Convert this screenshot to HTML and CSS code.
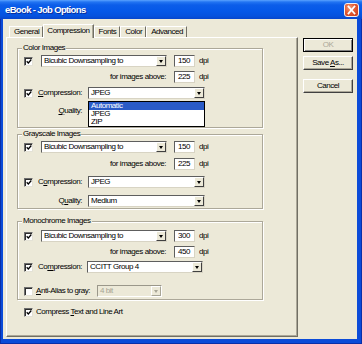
FILE: index.html
```html
<!DOCTYPE html>
<html>
<head>
<meta charset="utf-8">
<title>eBook - Job Options</title>
<link rel="stylesheet" href="styles.css">
</head>
<body>
<div class="window">
  <div class="titlebar">
    <span class="title">eBook - Job Options</span>
    <span class="close"><svg width="15" height="14" viewBox="0 0 15 14"><path d="M4.5 3.5 L10.5 10.5 M10.5 3.5 L4.5 10.5" stroke="#fff" stroke-width="1.8" stroke-linecap="square"/></svg></span>
  </div>
  <div class="frame">
    <div class="client">
      <div class="main">
        <div class="tabs">
          <span class="tab">General</span>
          <span class="tab active">Compression</span>
          <span class="tab">Fonts</span>
          <span class="tab">Color</span>
          <span class="tab">Advanced</span>
        </div>
        <div class="panel">
          <div class="group g-color">
            <span class="legend">Color Images</span>
            <div class="row first">
              <span class="check"><svg viewBox="0 0 7 7"><path d="M0.8 3.3 L2.7 5.2 L6.2 1.2"/></svg></span>
              <span class="select w-sample"><span class="val">Bicubic Downsampling to</span><span class="arrow"></span></span>
              <span class="input">150</span><span class="unit">dpi</span>
            </div>
            <div class="row gap4">
              <span class="above">for images above:</span>
              <span class="input">225</span><span class="unit">dpi</span>
            </div>
            <div class="row gap4">
              <span class="check"><svg viewBox="0 0 7 7"><path d="M0.8 3.3 L2.7 5.2 L6.2 1.2"/></svg></span>
              <span class="lbl w-comp"><u>C</u>ompression:</span>
              <span class="select w-type has-list"><span class="val">JPEG</span><span class="arrow"></span>
                <span class="listbox">
                  <span class="item sel">Automatic</span>
                  <span class="item">JPEG</span>
                  <span class="item">ZIP</span>
                </span>
              </span>
            </div>
            <div class="row gap6">
              <span class="lbl w-qual"><u>Q</u>uality:</span>
              <span class="select w-type"><span class="val"></span><span class="arrow"></span></span>
            </div>
          </div>

          <div class="group g-gray">
            <span class="legend">Grayscale Images</span>
            <div class="row first">
              <span class="check"><svg viewBox="0 0 7 7"><path d="M0.8 3.3 L2.7 5.2 L6.2 1.2"/></svg></span>
              <span class="select w-sample"><span class="val">Bicubic Downsampling to</span><span class="arrow"></span></span>
              <span class="input">150</span><span class="unit">dpi</span>
            </div>
            <div class="row gap5">
              <span class="above">for images above:</span>
              <span class="input">225</span><span class="unit">dpi</span>
            </div>
            <div class="row gap6">
              <span class="check"><svg viewBox="0 0 7 7"><path d="M0.8 3.3 L2.7 5.2 L6.2 1.2"/></svg></span>
              <span class="lbl w-comp">C<u>o</u>mpression:</span>
              <span class="select w-type"><span class="val">JPEG</span><span class="arrow"></span></span>
            </div>
            <div class="row gap7">
              <span class="lbl w-qual">Q<u>u</u>ality:</span>
              <span class="select w-type"><span class="val">Medium</span><span class="arrow"></span></span>
            </div>
          </div>

          <div class="group g-mono">
            <span class="legend">Monochrome Images</span>
            <div class="row first">
              <span class="check"><svg viewBox="0 0 7 7"><path d="M0.8 3.3 L2.7 5.2 L6.2 1.2"/></svg></span>
              <span class="select w-sample"><span class="val">Bicubic Downsampling to</span><span class="arrow"></span></span>
              <span class="input">300</span><span class="unit">dpi</span>
            </div>
            <div class="row gap4">
              <span class="above">for images above:</span>
              <span class="input">450</span><span class="unit">dpi</span>
            </div>
            <div class="row gap3">
              <span class="check"><svg viewBox="0 0 7 7"><path d="M0.8 3.3 L2.7 5.2 L6.2 1.2"/></svg></span>
              <span class="lbl w-comp-m">Co<u>m</u>pression:</span>
              <span class="select w-type-m"><span class="val">CCITT Group 4</span><span class="arrow"></span></span>
            </div>
            <div class="row gap12">
              <span class="check off"></span>
              <span class="lbl w-anti"><u>A</u>nti-Alias to gray:</span>
              <span class="select w-bit disabled"><span class="val">4 bit</span><span class="arrow"></span></span>
            </div>
          </div>

          <div class="row compress">
            <span class="check"><svg viewBox="0 0 7 7"><path d="M0.8 3.3 L2.7 5.2 L6.2 1.2"/></svg></span>
            <span class="lbl">Compress <u>T</u>ext and Line Art</span>
          </div>
        </div>
      </div>
      <div class="buttons">
        <span class="btn default disabled">OK</span>
        <span class="btn b-save">Save <u>A</u>s...</span>
        <span class="btn b-cancel">Cancel</span>
      </div>
    </div>
  </div>
</div>
</body>
</html>
```

FILE: styles.css
```css
* { box-sizing: border-box; }
html, body { margin: 0; padding: 0; }
body {
  width: 362px;
  height: 344px;
  overflow: hidden;
  font-family: "Liberation Sans", Arial, sans-serif;
  font-size: 8px;
  letter-spacing: -0.45px;
  color: #000;
  background: #0B4BD8;
}
u { text-decoration: underline; text-underline-offset: 1px; }

.window {
  width: 362px;
  height: 344px;
  display: flex;
  flex-direction: column;
  background: #0B4BD8;
}
.titlebar {
  height: 19px;
  flex: none;
  display: flex;
  align-items: center;
  padding: 0 3px 0 5px;
  background: linear-gradient(to bottom, #5AA2FF 0px, #2274F2 2px, #0C5DE9 5px, #0558E8 11px, #0552DE 16px, #0746CC 19px);
}
.title {
  flex: 1;
  color: #fff;
  font-weight: bold;
  font-size: 9.5px;
  letter-spacing: -0.65px;
  text-shadow: 1px 1px 0 #0A2F9C;
}
.close {
  width: 15px;
  height: 14px;
  margin-top: 1px;
  border-radius: 3px;
  border: 1px solid #F4F0F0;
  background: radial-gradient(circle at 35% 30%, #F29A78 0%, #E25A32 45%, #C8371A 100%);
  display: flex;
  align-items: center;
  justify-content: center;
}
.close svg { display: block; margin: -1px; }

.frame {
  flex: 1;
  display: flex;
  padding: 0 5px 5px 3px;
  box-shadow: inset 1px 0 0 #0A2FA8, inset -1px 0 0 #0A2FA8, inset 0 -1px 0 #0A2FA8;
}
.client {
  flex: 1;
  display: flex;
  background: #ECE9D8;
  padding: 5px 4px 2px 3px;
}
.main {
  width: 292px;
  display: flex;
  flex-direction: column;
}

/* tabs */
.tabs {
  display: flex;
  align-items: flex-start;
  height: 14px;
  margin-bottom: -1px;
  padding-left: 3px;
  position: relative;
  z-index: 1;
}
.tab {
  height: 11px;
  margin-top: 2px;
  padding: 0 3px 0 4px;
  line-height: 10px;
  background: #ECE9D8;
  border-top: 1px solid #fff;
  border-left: 1px solid #fff;
  border-right: 1px solid #716F64;
  white-space: nowrap;
}
.tab.active {
  height: 14px;
  margin-top: 0;
  line-height: 12px;
  padding: 0 3px;
  box-shadow: inset -1px 0 0 #ACA899;
}

.panel {
  flex: 1;
  display: flex;
  flex-direction: column;
  align-items: flex-start;
  border: 1px solid;
  border-color: #fff #716F64 #716F64 #fff;
  box-shadow: inset -1px -1px 0 #ACA899;
  padding: 10px 0 0 10px;
}

/* group boxes */
.group {
  width: 246px;
  border: 1px solid #ACA899;
  box-shadow: inset 1px 1px 0 #fff, 1px 1px 0 #fff;
  padding: 0 0 0 6px;
  position: relative;
}
.legend {
  display: block;
  width: fit-content;
  margin: -6px 0 0 -2px;
  padding: 0 1px;
  height: 10px;
  line-height: 10px;
  background: #ECE9D8;
  white-space: nowrap;
}
.g-color { padding-bottom: 10px; }
.g-gray { margin-top: 6px; padding-bottom: 1px; }
.g-mono { margin-top: 12px; padding-bottom: 2px; }

.row {
  display: flex;
  align-items: center;
  height: 12px;
  white-space: nowrap;
}
.row.first { margin-top: 2px; }
.g-mono .row.first { margin-top: 4px; }
.gap3 { margin-top: 3px; }
.gap4 { margin-top: 4px; }
.gap5 { margin-top: 5px; }
.gap6 { margin-top: 6px; }
.gap7 { margin-top: 7px; }
.gap12 { margin-top: 12px; }
.compress { margin: 6px 0 0 7px; }

/* checkbox */
.check {
  flex: none;
  width: 9px;
  height: 9px;
  background: #fff;
  border: 1px solid;
  border-color: #6E6E6E #E4E2D6 #E4E2D6 #6E6E6E;
  box-shadow: inset 1px 1px 0 #2E2E2E;
  display: flex;
  align-items: center;
  justify-content: center;
}
.check svg { width: 7px; height: 7px; margin: 1px 0 0 1px; }
.check path { fill: none; stroke: #000; stroke-width: 1.5; }
.row .check + .select { margin-left: 8px; }

/* labels */
.lbl { line-height: 10px; }
.w-comp { width: 50px; margin-left: 5px; }
.w-comp-m { width: 49px; margin-left: 5px; }
.w-qual { width: 64px; text-align: right; padding-right: 6px; }
.w-anti { width: 61px; margin-left: 3px; }
.compress .lbl { margin-left: 3px; }
.above { width: 143px; text-align: right; padding-right: 1px; line-height: 10px; }

/* combo boxes */
.select {
  flex: none;
  display: flex;
  height: 12px;
  background: #fff;
  border: 1px solid;
  border-color: #5E5E5E #D8D4C4 #D8D4C4 #5E5E5E;
  position: relative;
}
.w-sample { width: 126px; }
.w-type { width: 117px; }
.w-type-m { width: 116px; }
.w-bit { width: 65px; }
.val {
  flex: 1;
  padding-left: 2px;
  line-height: 10px;
  overflow: hidden;
}
.arrow {
  flex: none;
  width: 10px;
  background: #ECE9D8;
  border: 1px solid;
  border-color: #fff #404040 #404040 #fff;
  display: flex;
  align-items: center;
  justify-content: center;
}
.arrow::after {
  content: "";
  border-left: 2.5px solid transparent;
  border-right: 2.5px solid transparent;
  border-top: 3px solid #000;
  margin-top: 1px;
}
.select.disabled { background: #ECE9D8; border-color: #9A978A #fff #fff #9A978A; }
.select.disabled .val { color: #A7A596; }
.select.disabled .arrow { border-color: #fff #A7A596 #A7A596 #fff; }
.select.disabled .arrow::after { border-top-color: #A7A596; }

.listbox {
  position: absolute;
  left: -1px;
  top: 13px;
  width: 117px;
  height: 26px;
  background: #fff;
  border: 1px solid #000;
  display: flex;
  flex-direction: column;
  z-index: 2;
}
.item {
  height: 8px;
  line-height: 8px;
  padding-left: 2px;
}
.item.sel { background: #2A5BC7; color: #fff; }

.input {
  flex: none;
  width: 21px;
  height: 12px;
  margin-left: 7px;
  padding-left: 3px;
  line-height: 10px;
  background: #fff;
  border: 1px solid;
  border-color: #5E5E5E #D8D4C4 #D8D4C4 #5E5E5E;
}
.unit { margin-left: 4px; line-height: 10px; }

/* buttons */
.buttons {
  width: 50px;
  margin-left: 5px;
  display: flex;
  flex-direction: column;
  padding-top: 14px;
}
.btn {
  height: 14px;
  line-height: 12px;
  text-align: center;
  background: #ECE9D8;
  border: 1px solid;
  border-color: #fff #404040 #404040 #fff;
  box-shadow: inset -1px -1px 0 #ACA899;
}
.btn.default {
  border: 1px solid #000;
  box-shadow: inset 1px 1px 0 #fff, inset -1px -1px 0 #808080;
}
.btn.disabled { color: #ACA899; }
.b-save { margin-top: 4px; }
.b-cancel { margin-top: 9px; }
```
